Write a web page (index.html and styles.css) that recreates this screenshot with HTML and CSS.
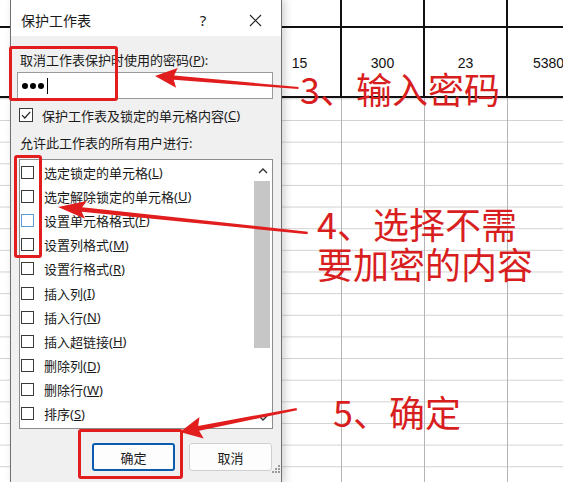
FILE: index.html
```html
<!DOCTYPE html>
<html lang="zh-CN">
<head>
    <meta charset="UTF-8">
    <meta name="viewport" content="width=device-width, initial-scale=1.0">
    <title>保护工作表</title>
    <link rel="stylesheet" href="styles.css">
</head>
<body>

    <!-- Planilha ao fundo -->
    <div class="sheet">
        <div class="sheet-row row-top">
            <div class="cell"></div>
            <div class="cell"></div>
            <div class="cell"></div>
            <div class="cell"></div>
            <div class="cell"></div>
        </div>
        <div class="sheet-row row-data">
            <div class="cell"></div>
            <div class="cell">15</div>
            <div class="cell">300</div>
            <div class="cell">23</div>
            <div class="cell">5380</div>
        </div>
        <div class="sheet-row sheet-rest">
            <span></span>
            <span></span>
            <span></span>
            <span></span>
            <span></span>
        </div>
    </div>

    <!-- Dialog -->
    <div class="dialog">
        <div class="titlebar">
            <span class="title">保护工作表</span>
            <span class="help">?</span>
            <span class="close">
                <svg width="13" height="13" viewBox="0 0 13 13">
                    <path d="M1 1 12 12M12 1 1 12" stroke="#222" stroke-width="1.1" fill="none"></path>
                </svg>
            </span>
        </div>

        <div class="dialog-body">
            <div class="field-label">取消工作表保护时使用的密码(<u>P</u>):</div>
            <div class="password">
                <i class="dot"></i><i class="dot"></i><i class="dot"></i><i class="caret"></i>
            </div>

            <div class="check-row">
                <span class="box">
                    <svg width="12" height="12" viewBox="0 0 12 12">
                        <path d="M2 6.2 4.8 9 10.2 2.8" stroke="#222" stroke-width="1.2" fill="none"></path>
                    </svg>
                </span>
                保护工作表及锁定的单元格内容(<u>C</u>)
            </div>

            <div class="section-label">允许此工作表的所有用户进行:</div>

            <div class="listbox">
                <ul class="options">
                    <li><span class="box"></span>选定锁定的单元格(<u>L</u>)</li>
                    <li><span class="box"></span>选定解除锁定的单元格(<u>U</u>)</li>
                    <li><span class="box focus"></span>设置单元格格式(<u>F</u>)</li>
                    <li><span class="box"></span>设置列格式(<u>M</u>)</li>
                    <li><span class="box"></span>设置行格式(<u>R</u>)</li>
                    <li><span class="box"></span>插入列(<u>I</u>)</li>
                    <li><span class="box"></span>插入行(<u>N</u>)</li>
                    <li><span class="box"></span>插入超链接(<u>H</u>)</li>
                    <li><span class="box"></span>删除列(<u>D</u>)</li>
                    <li><span class="box"></span>删除行(<u>W</u>)</li>
                    <li><span class="box"></span>排序(<u>S</u>)</li>
                </ul>
                <div class="scrollbar">
                    <span class="scroll-btn">
                        <svg width="10" height="6" viewBox="0 0 10 6"><path d="M1 5 5 1 9 5" stroke="#333" stroke-width="1.4" fill="none"></path></svg>
                    </span>
                    <span class="thumb"></span>
                    <span class="scroll-btn down">
                        <svg width="10" height="6" viewBox="0 0 10 6"><path d="M1 1 5 5 9 1" stroke="#333" stroke-width="1.4" fill="none"></path></svg>
                    </span>
                </div>
            </div>

            <div class="buttons">
                <button class="btn primary">确定</button>
                <button class="btn">取消</button>
            </div>
        </div>

        <svg class="grip" width="9" height="9" viewBox="0 0 9 9">
            <rect x="7" y="1" width="2" height="2"></rect>
            <rect x="4" y="4" width="2" height="2"></rect>
            <rect x="7" y="4" width="2" height="2"></rect>
            <rect x="1" y="7" width="2" height="2"></rect>
            <rect x="4" y="7" width="2" height="2"></rect>
            <rect x="7" y="7" width="2" height="2"></rect>
        </svg>
    </div>

    <!-- Marcas vermelhas -->
    <div class="mark mark-password"></div>
    <div class="mark mark-checks"></div>
    <div class="mark mark-ok"></div>

    <svg class="arrows" width="563" height="482" viewBox="0 0 563 482">
        <g transform="translate(155 76) rotate(4.8)">
            <polygon points="0,0 22,-10 19,-2.2 144,-1 144,1 19,2.2 22,10"></polygon>
        </g>
        <g transform="translate(58 207) rotate(5.94)">
            <polygon points="0,0 28,-9 24,-2.2 251,-1.3 251,1.3 24,2.2 28,9"></polygon>
        </g>
        <g transform="translate(180 432) rotate(-11.1)">
            <polygon points="0,0 22,-11 19,-2.5 119,-1.2 119,1.2 19,2.5 22,11"></polygon>
        </g>
    </svg>

    <div class="note note-3">3、输入密码</div>
    <div class="note note-4">4、选择不需<br>要加密的内容</div>
    <div class="note note-5">5、确定</div>

</body>
</html>
```

FILE: styles.css
```css
body {
    margin: 0;
    width: 563px;
    height: 482px;
    overflow: hidden;
    position: relative;
    background-color: #ffffff;
    font-family: "Noto Sans", "Noto Sans CJK SC", sans-serif;
    color: #1a1a1a;
}

/* Sheet */
.sheet {
    width: 563px;
    overflow: hidden;
}

.sheet-row {
    display: grid;
    grid-template-columns: 259px 83px 83px 83px 83px;
}

.row-top {
    height: 28px;
}

.row-data {
    height: 70px;
}

.cell {
    box-sizing: border-box;
    border-right: 2px solid #111;
    border-bottom: 2px solid #111;
    overflow: hidden;
}

.row-data .cell {
    display: flex;
    align-items: center;
    justify-content: center;
    padding-top: 2px;
    font-family: "Liberation Sans", Arial, sans-serif;
    font-size: 14px;
    color: #111;
    white-space: nowrap;
}

.sheet-rest {
    height: 390px;
    background: linear-gradient(to bottom, transparent 20.65px, #d2d2d2 20.65px) 0 1.35px / 100% 21.65px;
}

.sheet-rest span {
    border-right: 1px solid #b4b4b4;
}

/* Dialog */
.dialog {
    position: absolute;
    left: 10px;
    top: -1px;
    width: 272px;
    height: 485px;
    box-sizing: border-box;
    border: 1px solid #707070;
    background-color: #f0f0f0;
    box-shadow: 3px 0 8px rgba(0, 0, 0, 0.18);
    font-size: 13px;
}

.titlebar {
    height: 36px;
    box-sizing: border-box;
    padding: 4px 0 0 10px;
    display: flex;
    align-items: center;
    background-color: #ffffff;
}

.title {
    font-size: 14px;
}

.help {
    margin-left: auto;
    width: 30px;
    margin-right: 17px;
    text-align: center;
    font-size: 15px;
}

.close {
    width: 40px;
    margin-right: 6px;
    display: flex;
    justify-content: center;
}

.dialog-body {
    padding: 0 8px 0 6px;
}

.field-label {
    margin-top: 15px;
    padding-left: 3px;
    line-height: 18px;
}

.password {
    margin-top: 3px;
    height: 27px;
    box-sizing: border-box;
    border: 1px solid #9a9a9a;
    background-color: #ffffff;
    display: flex;
    align-items: center;
    padding-left: 4px;
}

.dot {
    width: 6px;
    height: 6px;
    border-radius: 50%;
    background-color: #000;
    margin-right: 2px;
}

.caret {
    width: 1px;
    height: 16px;
    background-color: #000;
    margin-left: 1px;
}

.check-row {
    margin-top: 7px;
    height: 18px;
    padding-left: 2px;
    display: flex;
    align-items: center;
}

.check-row .box {
    width: 14px;
    height: 14px;
    margin-right: 9px;
}

.box {
    box-sizing: border-box;
    width: 13px;
    height: 13px;
    border: 1px solid #3a3a3a;
    background-color: #ffffff;
    display: flex;
    align-items: center;
    justify-content: center;
    flex-shrink: 0;
}

.box.focus {
    border-color: #5a9bd8;
}

.section-label {
    margin-top: 10px;
    padding-left: 3px;
    line-height: 18px;
}

.listbox {
    margin-top: 7px;
    margin-left: 2px;
    height: 270px;
    box-sizing: border-box;
    border: 1px solid #8c8c8c;
    background-color: #ffffff;
    display: flex;
}

.options {
    list-style: none;
    margin: 0;
    padding: 0 0 0 1px;
    flex: 1;
}

.options li {
    height: 24.2px;
    display: flex;
    align-items: center;
    white-space: nowrap;
}

.options .box {
    margin-right: 10px;
}

.scrollbar {
    width: 19px;
    display: flex;
    flex-direction: column;
}

.scroll-btn {
    height: 21px;
    display: flex;
    align-items: center;
    justify-content: center;
}

.scroll-btn.down {
    margin-top: auto;
    height: 20px;
}

.thumb {
    height: 167px;
    margin: 0 2px 0 1px;
    background-color: #c6c6c6;
}

.buttons {
    margin-top: 14px;
    padding-right: 1px;
    display: flex;
    justify-content: flex-end;
    gap: 14px;
}

.btn {
    width: 83px;
    height: 28px;
    box-sizing: border-box;
    border: 1px solid #cfcfcf;
    border-radius: 3px;
    background-color: #fdfdfd;
    font-family: inherit;
    font-size: 13px;
    color: #1a1a1a;
    padding: 0;
}

.btn.primary {
    border: 2px solid #0b5cb0;
}

.grip {
    position: absolute;
    right: 1px;
    bottom: 10px;
    fill: #9a9a9a;
}

/* Anotações */
.mark {
    position: absolute;
    box-sizing: border-box;
    border: 3px solid #e11d1d;
    border-radius: 3px;
}

.mark-password {
    left: 9px;
    top: 46px;
    width: 109px;
    height: 55px;
}

.mark-checks {
    left: 14px;
    top: 155px;
    width: 28px;
    height: 103px;
}

.mark-ok {
    left: 78px;
    top: 429px;
    width: 105px;
    height: 50px;
}

.arrows {
    position: absolute;
    left: 0;
    top: 0;
    fill: #e11d1d;
}

.note {
    position: absolute;
    font-family: "Noto Sans CJK SC", sans-serif;
    font-size: 36px;
    line-height: 36px;
    color: #d81e1e;
    white-space: nowrap;
}

.note-3 {
    left: 300px;
    top: 70px;
}

.note-4 {
    left: 317px;
    top: 203px;
    line-height: 40px;
}

.note-5 {
    left: 333px;
    top: 393px;
}
```
